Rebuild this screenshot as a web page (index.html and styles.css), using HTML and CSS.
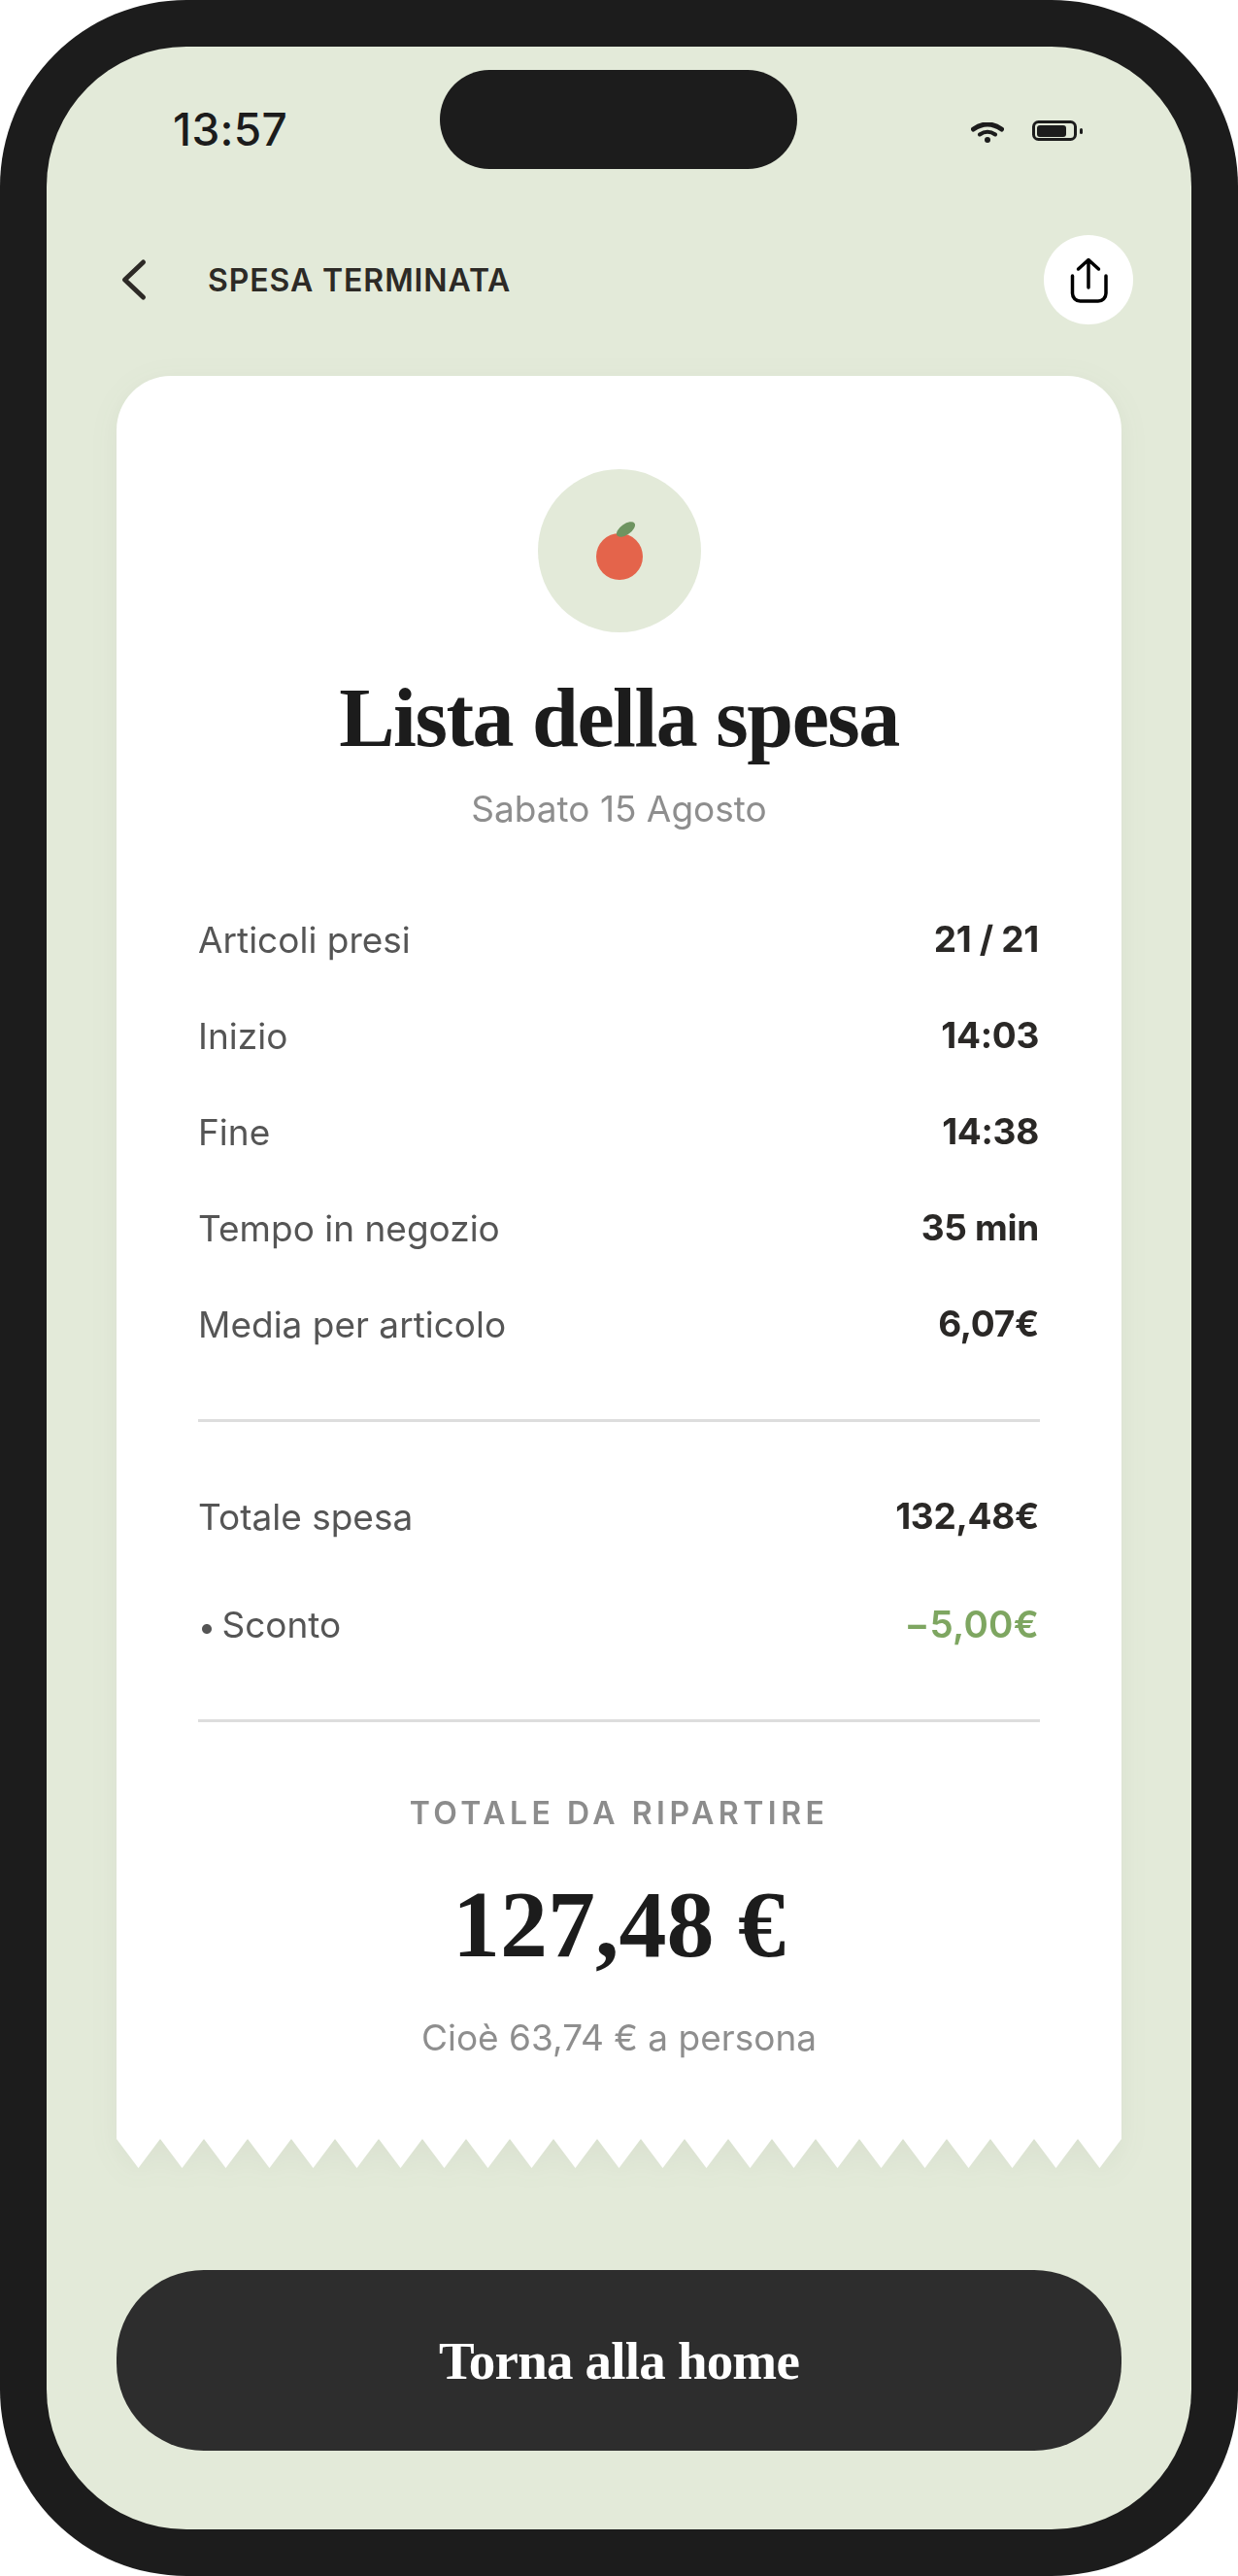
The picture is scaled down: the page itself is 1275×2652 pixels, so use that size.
FILE: index.html
```html
<!DOCTYPE html>
<html lang="it">
<head>
    <meta charset="UTF-8">
    <meta name="viewport" content="width=device-width, initial-scale=1.0">
    <title>Spesa terminata</title>
    <link rel="stylesheet" href="styles.css">
</head>
<body>
    <div class="phone">
        <div class="screen">
            <div class="island"></div>

            <!-- Status bar -->
            <div class="status-bar">
                <span class="time">13:57</span>
                <div class="status-icons">
                    <svg class="wifi" width="34" height="21" viewBox="0 0 34 21">
                        <path d="M2.5 7Q17 -3 31.5 7" fill="none" stroke="#1c1c1c" stroke-width="5" stroke-linecap="round"/>
                        <path d="M9 12.5Q17 7 25 12.5" fill="none" stroke="#1c1c1c" stroke-width="4" stroke-linecap="round"/>
                        <circle cx="17" cy="18" r="3" fill="#1c1c1c"/>
                    </svg>
                    <svg class="battery" width="52" height="21" viewBox="0 0 52 21">
                        <rect x="1.5" y="1.5" width="43" height="18" rx="5" fill="none" stroke="#1c1c1c" stroke-width="3"/>
                        <rect x="5" y="5" width="30" height="12" rx="3" fill="#1c1c1c"/>
                        <rect x="49" y="8" width="3" height="6" rx="1.5" fill="#1c1c1c"/>
                    </svg>
                </div>
            </div>

            <!-- Header -->
            <header class="top-bar">
                <svg class="back" width="28" height="46" viewBox="0 0 28 46">
                    <path d="M23.5 5L4.5 23L23.5 41" fill="none" stroke="#2d2a26" stroke-width="5" stroke-linecap="round" stroke-linejoin="round"/>
                </svg>
                <h2 class="top-title">SPESA TERMINATA</h2>
                <div class="share">
                    <svg width="46" height="52" viewBox="0 0 46 52">
                        <path d="M12.5 15L23 5.5L33.5 15M23 5.5V34M6.5 22V40a8 8 0 0 0 8 8H33a8 8 0 0 0 8-8V22" fill="none" stroke="#000" stroke-width="3.5" stroke-linecap="round" stroke-linejoin="round"/>
                    </svg>
                </div>
            </header>

            <!-- Receipt -->
            <div class="receipt">
                <div class="receipt-body">
                    <div class="badge">
                        <svg width="60" height="62" viewBox="0 0 60 62">
                            <circle cx="30" cy="38" r="24" fill="#e4644b"/>
                            <ellipse cx="36.5" cy="10" rx="11" ry="5.5" transform="rotate(-35 36.5 10)" fill="#6e9460"/>
                        </svg>
                    </div>
                    <h1 class="title">Lista della spesa</h1>
                    <p class="date">Sabato 15 Agosto</p>

                    <div class="rows">
                        <div class="row"><span>Articoli presi</span><strong>21 / 21</strong></div>
                        <div class="row"><span>Inizio</span><strong>14:03</strong></div>
                        <div class="row"><span>Fine</span><strong>14:38</strong></div>
                        <div class="row"><span>Tempo in negozio</span><strong>35 min</strong></div>
                        <div class="row"><span>Media per articolo</span><strong>6,07€</strong></div>
                    </div>

                    <div class="rows totals">
                        <div class="row"><span>Totale spesa</span><strong>132,48€</strong></div>
                        <div class="row"><span><span class="bullet">•</span> Sconto</span><strong class="discount">−5,00€</strong></div>
                    </div>

                    <div class="split">
                        <p class="split-label">TOTALE DA RIPARTIRE</p>
                        <p class="split-amount">127,48 €</p>
                        <p class="split-note">Cioè 63,74 € a persona</p>
                    </div>
                </div>
                <svg class="tear" width="1035" height="30" viewBox="0 0 1035 30">
                    <path fill="#fff" d="M0 0L22.5 30L45 0L67.5 30L90 0L112.5 30L135 0L157.5 30L180 0L202.5 30L225 0L247.5 30L270 0L292.5 30L315 0L337.5 30L360 0L382.5 30L405 0L427.5 30L450 0L472.5 30L495 0L517.5 30L540 0L562.5 30L585 0L607.5 30L630 0L652.5 30L675 0L697.5 30L720 0L742.5 30L765 0L787.5 30L810 0L832.5 30L855 0L877.5 30L900 0L922.5 30L945 0L967.5 30L990 0L1012.5 30L1035 0Z"/>
                </svg>
            </div>

            <button class="home-btn">Torna alla home</button>
        </div>
    </div>
</body>
</html>
```

FILE: styles.css
```css
* {
    box-sizing: border-box;
}
body {
    margin: 0;
    padding: 0;
    background-color: #fff;
    font-family: Inter, "Liberation Sans", sans-serif;
}
h1, h2, p {
    margin: 0;
}
.phone {
    width: 1275px;
    height: 2652px;
    padding: 48px;
    background: #1c1c1c;
    border-radius: 192px;
}
.screen {
    position: relative;
    height: 100%;
    padding: 0 72px;
    background: #e3ead9;
    border-radius: 144px;
}
.island {
    position: absolute;
    top: 24px;
    left: 405px;
    width: 368px;
    height: 102px;
    background: #1c1c1c;
    border-radius: 51px;
}

/* Status bar */
.status-bar {
    display: flex;
    justify-content: space-between;
    align-items: flex-start;
    height: 193px;
    padding: 56px 40px 0 58px;
}
.time {
    font-size: 46px;
    line-height: 58px;
    font-weight: 500;
    letter-spacing: 0.3px;
    color: #1c1c1c;
}
.status-icons {
    display: flex;
    align-items: flex-start;
    gap: 29px;
    padding-top: 20px;
}
.wifi {
    margin-top: 2px;
}

/* Header */
.top-bar {
    display: flex;
    align-items: center;
    height: 93px;
    margin: 0 -12px 53px 4px;
}
.back {
    margin-right: 62px;
}
.top-title {
    flex: 1;
    padding-top: 2px;
    font-size: 32px;
    font-weight: 600;
    letter-spacing: 0.9px;
    color: #2d2a26;
}
.share {
    display: flex;
    align-items: center;
    justify-content: center;
    width: 92px;
    height: 92px;
    background: #fff;
    border-radius: 50%;
}

/* Receipt */
.receipt {
    filter: drop-shadow(0 6px 14px rgba(70, 90, 60, 0.06));
}
.receipt-body {
    height: 1815px;
    padding: 96px 84px 0;
    background: #fff;
    border-radius: 56px 56px 0 0;
}
.tear {
    display: block;
}
.badge {
    display: flex;
    justify-content: center;
    width: 168px;
    height: 168px;
    margin: 0 auto;
    padding-top: 52px;
    background: #e3ead9;
    border-radius: 50%;
}
.title {
    margin-top: 33px;
    font-family: "Liberation Serif", serif;
    font-size: 86px;
    line-height: 110px;
    font-weight: 700;
    letter-spacing: -1.5px;
    text-align: center;
    color: #1c1c1c;
}
.date {
    margin-top: 16px;
    font-size: 37px;
    line-height: 46px;
    text-align: center;
    color: #8e8e8e;
}
.rows {
    margin-top: 61px;
    padding-bottom: 49px;
    border-bottom: 3px solid #ddd;
}
.row {
    display: flex;
    justify-content: space-between;
    align-items: center;
    height: 99px;
    padding-right: 1px;
    font-size: 37px;
    color: #555;
}
.row > span {
    padding-top: 2px;
}
.row strong {
    font-size: 37px;
    font-weight: 700;
    letter-spacing: -0.3px;
    color: #2a2826;
}
.bullet {
    margin-right: -4px;
    font-size: 32px;
}
.rows.totals {
    margin-top: 41px;
    padding-bottom: 43px;
}
.totals .row {
    height: 111px;
}
.row strong.discount {
    font-size: 38.5px;
    font-weight: 600;
    letter-spacing: 0.2px;
    color: #7ea661;
}

/* Total to split */
.split {
    margin-top: 71px;
    text-align: center;
}
.split-label {
    font-size: 32px;
    line-height: 46px;
    font-weight: 600;
    letter-spacing: 4.5px;
    color: #8c8c8c;
}
.split-amount {
    margin-top: 31px;
    font-family: "Liberation Serif", serif;
    font-size: 98px;
    line-height: 120px;
    font-weight: 700;
    color: #1c1c1c;
}
.split-note {
    margin-top: 34px;
    font-size: 37px;
    line-height: 46px;
    color: #8e8e8e;
}

/* Button */
.home-btn {
    display: block;
    width: 100%;
    height: 186px;
    margin-top: 105px;
    background: #2d2d2d;
    color: #fff;
    border: none;
    border-radius: 90px;
    font-family: "Liberation Serif", serif;
    font-size: 55px;
    font-weight: 700;
    letter-spacing: -0.8px;
}
```
